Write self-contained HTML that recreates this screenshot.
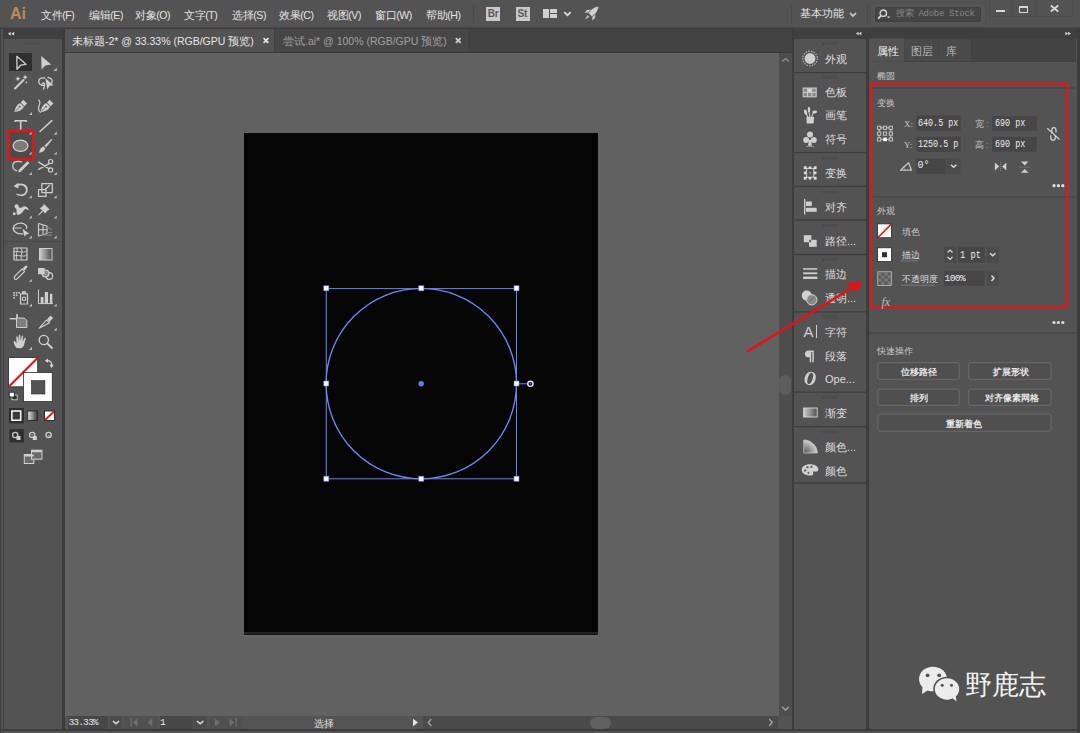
<!DOCTYPE html>
<html><head><meta charset="utf-8">
<style>
*{margin:0;padding:0;box-sizing:border-box}
html,body{width:1080px;height:733px;overflow:hidden;background:#535353;font-family:"Liberation Sans",sans-serif;color:#dcdcdc}
.a{position:absolute}
.t{position:absolute;white-space:nowrap;line-height:1}
svg{position:absolute;overflow:visible}
.mono{font-family:"Liberation Mono",monospace}
.sx{transform:scaleX(0.84);transform-origin:0 0}
</style></head><body>
<!-- window borders -->
<div class="a" style="left:0;top:0;width:1px;height:733px;background:#3e3e3e"></div>

<!-- ===== MENU BAR ===== -->
<div class="a" style="left:0;top:0;width:1080px;height:28px;background:#535353"></div>
<div class="t" style="left:10px;top:5.5px;font-size:16px;font-weight:bold;color:#bf8a5c;letter-spacing:0px">Ai</div>
<div class="t" style="left:41px;top:9.5px;font-size:10.5px;color:#e4e4e4;letter-spacing:-0.4px">文件(F)</div>
<div class="t" style="left:89px;top:9.5px;font-size:10.5px;color:#e4e4e4;letter-spacing:-0.4px">编辑(E)</div>
<div class="t" style="left:135px;top:9.5px;font-size:10.5px;color:#e4e4e4;letter-spacing:-0.4px">对象(O)</div>
<div class="t" style="left:184px;top:9.5px;font-size:10.5px;color:#e4e4e4;letter-spacing:-0.4px">文字(T)</div>
<div class="t" style="left:232px;top:9.5px;font-size:10.5px;color:#e4e4e4;letter-spacing:-0.4px">选择(S)</div>
<div class="t" style="left:279px;top:9.5px;font-size:10.5px;color:#e4e4e4;letter-spacing:-0.4px">效果(C)</div>
<div class="t" style="left:327px;top:9.5px;font-size:10.5px;color:#e4e4e4;letter-spacing:-0.4px">视图(V)</div>
<div class="t" style="left:375px;top:9.5px;font-size:10.5px;color:#e4e4e4;letter-spacing:-0.4px">窗口(W)</div>
<div class="t" style="left:426px;top:9.5px;font-size:10.5px;color:#e4e4e4;letter-spacing:-0.4px">帮助(H)</div>
<div class="a" style="left:473px;top:5px;width:1px;height:18px;background:#4a4a4a"></div>
<!-- Br / St -->
<div class="a" style="left:486px;top:7px;width:14px;height:14px;background:#c9c9c9"></div>
<div class="t" style="left:487.8px;top:9.3px;font-size:10px;font-weight:bold;color:#5a5a5a;letter-spacing:-0.3px">Br</div>
<div class="a" style="left:516px;top:7px;width:14px;height:14px;background:#c9c9c9"></div>
<div class="t" style="left:517.6px;top:9.3px;font-size:10px;font-weight:bold;color:#5a5a5a;letter-spacing:-0.3px">St</div>
<!-- layout icon -->
<svg style="left:543px;top:8px" width="16" height="11" viewBox="0 0 16 11">
<rect x="0" y="1" width="6" height="9" fill="#d0d0d0"/><rect x="7" y="1" width="7" height="4" fill="#d0d0d0"/><rect x="7" y="6" width="7" height="4" fill="#d0d0d0"/></svg>
<svg style="left:563px;top:10.5px" width="9" height="6" viewBox="0 0 9 6"><path d="M1.2 1.2 L4.5 4.2 L7.8 1.2" stroke="#d8d8d8" stroke-width="1.8" fill="none"/></svg>
<!-- rocket -->
<svg style="left:584px;top:6px" width="15" height="15" viewBox="0 0 15 15">
<path d="M14.5 0.5 C10 1 7 3.5 4.5 7 L8 10.5 C11.5 8 14 5 14.5 0.5 Z" fill="#cfcfcf"/>
<path d="M4 6.5 L0.5 7 L3 4 L6.5 3.5 Z M8.5 11 L8 14.5 L11 12 L11.5 8.5 Z" fill="#cfcfcf"/>
<path d="M3.5 9 L1 13.5 L5.5 11 Z" fill="#bdbdbd"/></svg>

<div class="a" style="left:791px;top:5px;width:1px;height:18px;background:#4a4a4a"></div>
<div class="t" style="left:800px;top:8.3px;font-size:10.5px;color:#e4e4e4">基本功能</div>
<svg style="left:849px;top:12px" width="8" height="6" viewBox="0 0 8 6"><path d="M1 1 L4 4 L7 1" stroke="#d0d0d0" stroke-width="1.6" fill="none"/></svg>
<div class="a" style="left:867px;top:5px;width:1px;height:18px;background:#4a4a4a"></div>
<!-- search -->
<div class="a" style="left:870px;top:2.5px;width:116px;height:24px;background:#565656;border:1px solid #4f4f4f;border-radius:2px"></div><div class="a" style="left:874.6px;top:7px;width:106.4px;height:15.4px;background:#454545;border:1px solid #3f3f3f;border-radius:2px"></div>
<svg style="left:877px;top:8px" width="16" height="13" viewBox="0 0 16 13"><circle cx="6.3" cy="5.2" r="3.2" stroke="#d8d8d8" stroke-width="1.3" fill="none"/><path d="M4 7.6 L1.2 10.6" stroke="#d8d8d8" stroke-width="1.8"/><path d="M9.8 8.6 L13.2 8.6 L11.5 10.2Z" fill="#d8d8d8"/></svg>
<div class="t mono" style="left:896px;top:9.5px;font-size:9px;color:#858585;letter-spacing:-0.3px">搜索 Adobe Stock</div>
<!-- window buttons -->
<div class="a" style="left:989px;top:0;width:84px;height:16.5px;border:1px solid #4d4d4d;border-top:none"></div>
<div class="a" style="left:1012px;top:0;width:1px;height:16px;background:#4d4d4d"></div>
<div class="a" style="left:1035px;top:0;width:1px;height:16px;background:#4d4d4d"></div>
<div class="a" style="left:995.7px;top:9.8px;width:9.3px;height:2.7px;background:#d8d8d8"></div>
<div class="a" style="left:1019.4px;top:6px;width:8.7px;height:6.5px;border:1.5px solid #d8d8d8;border-top-width:2px"></div>
<svg style="left:1049.9px;top:5px" width="9" height="7" viewBox="0 0 9 7"><path d="M0.8 0.5 L8.2 6.5 M8.2 0.5 L0.8 6.5" stroke="#d8d8d8" stroke-width="1.8"/></svg>
<!-- dark line under menu -->
<div class="a" style="left:0;top:27px;width:1080px;height:1px;background:#484848"></div><div class="a" style="left:0;top:28px;width:1080px;height:1px;background:#3a3a3a"></div>

<!-- ===== LEFT TOOLBAR ===== -->
<div class="a" style="left:3px;top:28px;width:1px;height:701px;background:#3e3e3e"></div>
<div class="a" style="left:4px;top:28px;width:58px;height:701px;background:#535353"></div>
<div class="a" style="left:4px;top:28px;width:58px;height:11px;background:#3f3f3f"></div>
<div class="a" style="left:62px;top:28px;width:3px;height:701px;background:#3c3c3c"></div>

<!-- toolbar header -->
<svg style="left:0;top:0" width="64" height="480" viewBox="0 0 64 480">
<g fill="#d8d8d8"><path d="M8 33.7 L10.8 31.7 L10.8 35.7Z M11.4 33.7 L14.2 31.7 L14.2 35.7Z"/></g>
<!-- gripper -->
<g fill="#464646"><rect x="24" y="42" width="1" height="3"/><rect x="26.5" y="42" width="1" height="3"/><rect x="29" y="42" width="1" height="3"/><rect x="31.5" y="42" width="1" height="3"/><rect x="34" y="42" width="1" height="3"/><rect x="36.5" y="42" width="1" height="3"/><rect x="39" y="42" width="1" height="3"/></g>
<rect x="9" y="53" width="23" height="18" fill="#2f2f2f"/>
<g fill="none" stroke="#cfcfcf" stroke-width="1.3" stroke-linejoin="round" stroke-linecap="round">
 <!-- selection -->
 <path d="M16.8 56.3 L26 64.3 L20.6 65.2 L17 69.3 Z"/>
 <!-- magic wand stick -->
 <path d="M15 88.5 L23.5 80" stroke-width="2"/>
 <!-- lasso loop -->
 <path d="M44.5 78 C41 77.2 38.6 79 38.8 81.8 C39 84.5 41.5 85.8 43.5 85.3 M42.5 85.5 C41.3 83.5 43.2 82 44.4 83.5 C45.3 84.8 44 87 43.6 89" stroke-width="1.3"/>
 <path d="M48 77.3 C51.5 78 53 80.5 51.8 83" stroke-width="1.3"/>
 <!-- T -->
 <path d="M15.3 122 L15.3 120.8 L26.2 120.8 L26.2 122 M20.7 120.8 L20.7 130" stroke-width="1.6" stroke-linecap="butt"/>
 <!-- line -->
 <path d="M40 131.5 L51.8 120.6" stroke-width="1.5"/>
 <!-- curvature tail -->
 <path d="M38.8 100 C40.5 102 40 104 39 106 C38 108 38.5 111 40.5 112.3" stroke-width="1.2"/>
 <!-- shaper arc -->
 <path d="M16.5 170.7 C11.5 169 11.5 162 17 161.5 C19 161.3 20.5 161.5 21.5 162" stroke-width="1.3"/>
 <!-- scissors -->
 <path d="M38.7 162.2 L48.8 168.6 M38.7 169.3 L48.8 163.8" stroke-width="1.4"/>
 <circle cx="50.6" cy="161.6" r="2.1" stroke-width="1.2"/><circle cx="50.6" cy="169.9" r="2.1" stroke-width="1.2"/>
 <!-- rotate -->
 <path d="M17.5 185 C22 183.2 27 185.5 26.8 190 C26.6 193 24.5 195 21.5 195.3" stroke-width="1.8"/>
 <path d="M20 195.2 L16.5 194.2" stroke-width="1.5" stroke-dasharray="1 1"/>
 <!-- scale -->
 <rect x="38.5" y="189.6" width="7.5" height="6.8" stroke-width="1.2"/>
 <rect x="41.8" y="183.6" width="10.5" height="9" stroke-width="1.2"/>
 <path d="M45 189.5 L49.5 185.5" stroke-width="1.2"/>
 <!-- shape builder ellipse -->
 <path d="M23 233.8 C15 234.5 12.5 230 13.5 227 C14.5 223.5 21 222 25 224.5 C26.5 225.5 27 227 26.5 228.5" stroke-width="1.2"/>
 <path d="M13.5 228 L21 228" stroke-width="1"/>
 <!-- perspective grid -->
 <path d="M38.5 223.5 L38.5 236 L47 233.5 L47 226 Z M38.5 229.7 L47 229.7 M43 224.8 L43 234.8" stroke-width="1.1"/>
 <!-- mesh -->
 <rect x="14" y="248" width="13" height="12" stroke-width="1.2"/>
 <path d="M17 248 C18 252 15 255 17 260 M21 248 C24 252 19 256 22 260 M14 252 C18 250 22 254 27 251 M14 256 C18 254 23 258 27 255" stroke-width="1"/>
 <!-- eyedropper body -->
 <path d="M15 279.2 C13.8 278 14 277 15 276 L22 269 L24.5 271.5 L17.5 278.5 C16.5 279.5 15.8 279.8 15 279.2Z" stroke-width="1.1"/>
 <!-- blend circles -->
 <circle cx="49.3" cy="276" r="3.3" stroke-width="1.2"/>
 <circle cx="45.5" cy="273.4" r="3.4" stroke-width="1.2" fill="#8a8a8a"/>
 <!-- symbol sprayer -->
 <rect x="20.5" y="293.8" width="7" height="10.2" stroke-width="1.2"/>
 <circle cx="24" cy="298.8" r="1.8" stroke-width="1.1"/>
 <!-- column graph -->
 <path d="M38.5 290 L38.5 303.6 L52.6 303.6" stroke-width="1"/>
 <!-- artboard -->
 <path d="M17 314.3 L17 318 M10 318.8 L16 318.8" stroke-width="1.1"/>
 <!-- slice -->
 <path d="M39 328.3 L46.5 320 L49.5 322.8 Z" stroke-width="1.1"/>
 <!-- zoom -->
 <circle cx="43.8" cy="340" r="4.6" stroke-width="1.4"/>
 <path d="M47.2 343.4 L52 348" stroke-width="2"/>
</g>
<g fill="#cfcfcf">
 <!-- direct selection -->
 <path d="M41.2 56 L51.2 64.4 L45.3 65.5 L41.6 69.5 Z"/>
 <!-- magic wand stars -->
 <path d="M17.9 76.3 L18.8 78 L20.5 78.8 L18.8 79.6 L17.9 81.3 L17 79.6 L15.3 78.8 L17 78Z"/>
 <path d="M25.1 74.8 L26 76.5 L27.7 77.3 L26 78.1 L25.1 79.8 L24.2 78.1 L22.5 77.3 L24.2 76.5Z"/>
 <path d="M26.2 81 L26.9 82.4 L26.2 83.8 L25.5 82.4Z M24.8 82.4 L26.2 81.7 L27.6 82.4 L26.2 83.1Z"/>
<!-- lasso arrow -->
 <path d="M45.5 78.2 L53.6 85.2 L49.6 85.8 L47.2 89.5 Z"/>
 <!-- pen -->
 <path d="M14.3 112.2 C15 108 16.5 105 20 103 L24 106.7 C22 110 19 111.5 14.3 112.2Z"/>
 <path d="M20.8 102.5 L23.3 99.8 L27 103.4 L24.4 106.2Z"/>
 <path d="M15 111.5 L19.3 107.2" stroke="#5a5a5a" stroke-width="0.8"/><circle cx="19.8" cy="106.7" r="0.9" fill="#5a5a5a"/>
 <!-- curvature pen -->
 <path d="M40.5 112.2 C41.2 108 42.7 105 46.2 103 L50.2 106.7 C48.2 110 45.2 111.5 40.5 112.2Z"/>
 <path d="M47 102.5 L49.5 99.8 L53.4 103.4 L50.6 106.2Z"/>
 <path d="M41.2 111.5 L45.5 107.2" stroke="#5a5a5a" stroke-width="0.8"/><circle cx="46" cy="106.7" r="0.9" fill="#5a5a5a"/>
 <!-- paintbrush -->
 <path d="M39 152.8 C39.5 149.5 41 147.3 43.5 146.5 L45.3 148.3 C44.5 151 42.5 152.5 39 152.8Z"/>
 <path d="M44.3 145.8 L51 139.2 C51.8 138.6 52.6 139.3 52 140.1 L46 147.5Z"/>
 <!-- shaper pencil -->
 <path d="M18.2 172.6 L18.8 169.8 L27.5 161.2 L29.4 163.1 L20.8 171.8Z"/>
 <!-- rotate arrowhead -->
 <path d="M13.6 186.2 L18.2 182.8 L18.6 188.6Z"/>
 <!-- warp -->
 <path d="M14.5 206 C15.5 203.5 18 204 18.5 206 C19 208 21 208.5 22.5 207 C24 205.5 27 206 28.8 209.5 L27.6 210 C26.5 208.5 25 208.5 24 210 C22 213 20.5 214.5 17.5 215 C15.8 213 17 211 16.5 209.5 C16 208 14 207.5 14.5 206Z"/>
 <rect x="13" y="212.5" width="2.5" height="2.5"/>
 <!-- pin -->
 <path d="M44 204 L49.6 209.6 L47.6 210.6 L45.2 213.6 L39.9 208.2 L42.9 205.9Z"/>
 <path d="M41.8 210.7 L38 215 L38.6 215.6 L42.9 211.8Z"/>
 <!-- shape builder arrow -->
 <path d="M22.5 228.8 L29.3 233.8 L26.2 234.5 L24.5 236.5Z"/>
 <!-- blend square -->
 <rect x="38.1" y="268" width="6.4" height="6.2"/>
 <!-- eyedropper bulb -->
 <path d="M22.5 268.5 L25.5 265.8 C26.5 265 28 266.5 27.2 267.5 L24.5 270.5Z"/>
 <path d="M47 319.3 L50.5 315.5 L53 318 L49.6 322Z"/>
 <!-- symbol sprayer dots -->
 <rect x="13.3" y="292" width="1.6" height="1.6"/><rect x="15.8" y="292" width="1.6" height="1.6"/><rect x="18.3" y="292" width="1.6" height="1.6"/>
 <rect x="13.3" y="294.5" width="1.6" height="1.6"/><rect x="15.8" y="294.5" width="1.6" height="1.6"/>
 <rect x="13.3" y="297" width="1.6" height="1.6"/>
 <rect x="22" y="291.2" width="3.8" height="2.3"/>
 <!-- column bars -->
 <rect x="40.7" y="297" width="2.8" height="6.2"/><rect x="44.8" y="292" width="3.2" height="11.2"/><rect x="49.9" y="293.8" width="2.4" height="9.4"/>
 <!-- hand -->
 <path d="M16.5 348 C14.5 345.5 13.5 343 13.8 341.5 C14.2 340.8 15 341 15.8 342.2 L16.5 343.2 L16.3 337 C16.3 336 17.6 336 17.7 337 L18.4 341 L18.8 335.5 C18.9 334.6 20.2 334.6 20.3 335.5 L20.7 341 L21.8 336 C22 335.2 23.2 335.3 23.1 336.2 L22.7 341.5 L24.6 338 C25 337.3 26 337.6 25.8 338.4 L24 345 C23.5 347 22 348.2 20.5 348.2Z"/>
 <!-- artboard doc -->
 <path d="M16.5 318 L24.3 318 L26.8 320.5 L26.8 327.5 L16.5 327.5Z" fill="#7e7e7e" stroke="#cfcfcf" stroke-width="1"/><path d="M17 314.3 L17 318 M10 318.8 L17 318.8" stroke="#d8d8d8" stroke-width="1.1"/>
 <!-- gradient -->
</g>
<defs><linearGradient id="gr" x1="0" x2="1" y1="0" y2="0"><stop offset="0" stop-color="#d0d0d0"/><stop offset="1" stop-color="#4a4a4a"/></linearGradient></defs>
<rect x="39.5" y="248.5" width="12.5" height="11.5" fill="url(#gr)" stroke="#cfcfcf" stroke-width="1"/>
<!-- perspective fades -->
<path d="M47 227 L52 229.5 M47 232.5 L52 232.5 M41 235 L52 235" stroke="#8a8a8a" stroke-width="1"/>
<rect x="10" y="132" width="22" height="26" fill="#4b4b4b"/>
<!-- flyout triangles -->
<g fill="#bdbdbd">
 <path d="M56.8 67.7 L56.8 71 L53.5 71Z"/>
 <path d="M32 112 L32 115 L29 115Z"/>
 <path d="M31.6 131.8 L31.6 134.6 L28.8 134.6Z"/>
 <path d="M56.8 131.6 L56.8 134.8 L53.6 134.8Z"/>
 <path d="M31.6 151.8 L31.6 154.6 L28.8 154.6Z"/>
 <path d="M56.8 151.8 L56.8 154.6 L54 154.6Z"/>
 <path d="M31.8 172 L31.8 175 L28.8 175Z"/>
 <path d="M56.8 172 L56.8 175 L53.8 175Z"/>
 <path d="M31.8 195.3 L31.8 198.3 L28.8 198.3Z"/>
 <path d="M56.7 195.3 L56.7 198.3 L53.7 198.3Z"/>
 <path d="M31.8 215.5 L31.8 218.5 L28.8 218.5Z"/>
 <path d="M56.7 215.5 L56.7 218.5 L53.7 218.5Z"/>
 <path d="M31.8 235.5 L31.8 238.5 L28.8 238.5Z"/>
 <path d="M56.7 235.5 L56.7 238.5 L53.7 238.5Z"/>
 <path d="M31.8 278.9 L31.8 281.8 L28.8 281.8Z"/>
 <path d="M32 303.7 L32 306.5 L28.9 306.5Z"/>
 <path d="M56.7 303.7 L56.7 306.5 L53.7 306.5Z"/>
 <path d="M56.7 327.5 L56.7 330.7 L53.7 330.7Z"/>
 <path d="M32 346.7 L32 350 L28.9 350Z"/>
</g>
<!-- separator -->
<rect x="5" y="241" width="56" height="1" fill="#4a4a4a"/>
<!-- ellipse tool selected -->
<ellipse cx="20.5" cy="145.8" rx="7.4" ry="5.6" fill="#7a7a7a" stroke="#d6d6d6" stroke-width="1.2"/>
<rect x="8.9" y="130.9" width="24.3" height="28.2" fill="none" stroke="#e0151b" stroke-width="2.6"/>
<!-- fill / stroke -->
<rect x="8.6" y="357.6" width="29.1" height="29.2" fill="#ffffff" stroke="#2a2a2a" stroke-width="0.8"/>
<path d="M9.5 386 L37 358.5" stroke="#e0151b" stroke-width="2.2"/>
<rect x="23.4" y="372.4" width="28.9" height="29.2" fill="#ffffff" stroke="#2a2a2a" stroke-width="0.8"/>
<rect x="31.5" y="380.6" width="13.4" height="13.4" fill="#535353" stroke="#2a2a2a" stroke-width="0.6"/>
<!-- swap -->
<path d="M47.5 360.7 C50 360.7 51.6 362.2 51.6 365" stroke="#d0d0d0" stroke-width="1.3" fill="none"/>
<path d="M44.8 360.7 L48 358.6 L48 362.8Z M51.6 368 L49.5 364.8 L53.7 364.8Z" fill="#d8d8d8"/>
<!-- default -->
<rect x="12" y="395" width="5.2" height="4.8" fill="#2a2a2a" stroke="#cfcfcf" stroke-width="0.9"/>
<rect x="9.3" y="392.2" width="5.2" height="4.8" fill="#ffffff" stroke="#2a2a2a" stroke-width="0.9"/>
<!-- color mode row -->
<rect x="9" y="408" width="15" height="15.4" fill="#2f2f2f"/>
<rect x="11.9" y="411" width="8.8" height="9.2" fill="#3a3a3a" stroke="#ffffff" stroke-width="1.5"/>
<defs><linearGradient id="gr2" x1="0" x2="1"><stop offset="0" stop-color="#e8e8e8"/><stop offset="1" stop-color="#3a3a3a"/></linearGradient></defs>
<rect x="27.7" y="411" width="9.6" height="9.4" fill="url(#gr2)" stroke="#222" stroke-width="0.9"/>
<rect x="44.5" y="411" width="10" height="9.4" fill="#ffffff" stroke="#222" stroke-width="0.9"/>
<path d="M45 420 L54 411.5" stroke="#e0151b" stroke-width="1.8"/>
<!-- draw modes -->
<rect x="9.6" y="429.1" width="14.2" height="13.3" fill="#2f2f2f"/>
<g fill="none" stroke="#c8c8c8" stroke-width="1.4">
<circle cx="15.2" cy="435" r="2.6"/><circle cx="32.2" cy="435" r="2.6"/><circle cx="48.6" cy="435" r="2.6"/>
</g>
<rect x="16.5" y="436" width="4" height="4" fill="#d0d0d0"/>
<rect x="32.8" y="436" width="4" height="4" fill="#d0d0d0"/>
<circle cx="32.2" cy="435" r="0.8" fill="#9a9a9a"/>
<path d="M48.6 435 L49.6 437.5" stroke="#c8c8c8" stroke-width="1"/>
<!-- screen mode -->
<rect x="24.3" y="454.5" width="9.5" height="9" fill="#6a6a6a" stroke="#d0d0d0" stroke-width="1"/>
<rect x="31.5" y="450.2" width="10.5" height="9" fill="#6a6a6a" stroke="#d0d0d0" stroke-width="1"/>
<rect x="24.3" y="454.5" width="9.5" height="2" fill="#d0d0d0"/>
<rect x="31.5" y="450.2" width="10.5" height="2" fill="#d0d0d0"/>
</svg>

<!-- ===== DOCUMENT AREA ===== -->
<div class="a" style="left:65px;top:29px;width:727px;height:24px;background:#424242"></div>
<div class="a" style="left:65px;top:29px;width:209px;height:23px;background:#535353"></div>
<div class="t" style="left:72px;top:36px;font-size:10.5px;color:#e6e6e6">未标题-2* @ 33.33% (RGB/GPU 预览)</div>
<div class="a" style="left:275px;top:29px;width:193px;height:23px;background:#474747"></div>
<div class="t" style="left:283px;top:36px;font-size:10.5px;color:#a0a0a0">尝试.ai* @ 100% (RGB/GPU 预览)</div>
<svg style="left:0;top:0" width="600" height="60" viewBox="0 0 600 60"><path d="M263.6 38.2 L268.4 42.8 M268.4 38.2 L263.6 42.8" stroke="#e8e8e8" stroke-width="1.7"/><path d="M455.8 38.2 L460.6 42.8 M460.6 38.2 L455.8 42.8" stroke="#cfcfcf" stroke-width="1.7"/></svg>

<div class="a" style="left:65px;top:52px;width:727px;height:1px;background:#383838"></div>

<!-- canvas -->
<div class="a" style="left:65px;top:53px;width:713.5px;height:663px;background:#616161"></div>
<div class="a" style="left:65px;top:53px;width:6px;height:663px;background:#646464"></div>
<!-- artboard -->
<div class="a" style="left:244px;top:133px;width:354px;height:500px;background:#050505"></div><div class="a" style="left:244px;top:632px;width:354px;height:1.6px;background:#222"></div><div class="a" style="left:244px;top:633.6px;width:354px;height:1.4px;background:#121212"></div><div class="a" style="left:244px;top:635px;width:354px;height:1.5px;background:#676767"></div>

<!-- selection -->
<svg style="left:0;top:0" width="1080" height="733" viewBox="0 0 1080 733">
<g fill="none" stroke="#6c84ea" stroke-width="1">
<circle cx="421.3" cy="383.6" r="95.2" stroke-width="1.35" stroke="#7088ee"/>
<rect x="326.3" y="288.6" width="190.2" height="190.2"/>
<path d="M519 383.8 L527.5 383.8"/>
</g>
<g fill="#ffffff" stroke="#6c84ea" stroke-width="0.6">
<rect x="323.8" y="285.8" width="5" height="5"/><rect x="418.8" y="285.8" width="5" height="5"/><rect x="514" y="285.8" width="5" height="5"/>
<rect x="323.8" y="381" width="5" height="5"/><rect x="514" y="381" width="5" height="5"/>
<rect x="323.8" y="476.2" width="5" height="5"/><rect x="418.8" y="476.2" width="5" height="5"/><rect x="514" y="476.2" width="5" height="5"/>
</g>
<circle cx="530.4" cy="383.8" r="2.6" fill="#0a0a0a" stroke="#e6ebff" stroke-width="1.4"/>
<circle cx="530.4" cy="383.8" r="0.8" fill="#6c84ea"/>
<circle cx="421.2" cy="383.7" r="2.7" fill="#5f7ef0"/>
</svg>
<!-- vertical scrollbar -->
<div class="a" style="left:778.5px;top:53px;width:14px;height:663px;background:#4d4d4d"></div>
<div class="a" style="left:779.3px;top:374.6px;width:11.7px;height:20px;background:#5c5c5c;border-radius:6px"></div>
<!-- horizontal/status bar -->
<div class="a" style="left:65px;top:716px;width:727px;height:13px;background:#545454"></div>
<div class="a" style="left:68px;top:716px;width:40px;height:12.5px;background:#474747"></div>
<div class="t mono" style="left:68.5px;top:718px;font-size:9.6px;color:#e6e6e6;letter-spacing:-0.9px">33.33%</div>
<div class="a" style="left:110px;top:716px;width:12px;height:12.5px;background:#4c4c4c"></div>
<div class="a" style="left:124px;top:716px;width:33px;height:12.5px;background:#505050"></div>
<div class="a" style="left:159.5px;top:716px;width:33px;height:12.5px;background:#474747"></div>
<div class="t mono" style="left:160px;top:718px;font-size:9.6px;color:#e6e6e6">1</div>
<div class="a" style="left:193.5px;top:716px;width:13.5px;height:12.5px;background:#4c4c4c"></div>
<div class="a" style="left:209px;top:716px;width:34px;height:12.5px;background:#505050"></div>
<div class="a" style="left:423px;top:716px;width:355px;height:12.5px;background:#4a4a4a"></div>
<div class="a" style="left:590px;top:716.7px;width:21px;height:12px;background:#5f5f5f;border-radius:6px"></div>
<div class="t" style="left:314px;top:719px;font-size:10px;color:#e0e0e0">选择</div>
<svg style="left:0;top:0" width="1080" height="733" viewBox="0 0 1080 733">
<path d="M113 721 L116 723.8 L119 721" stroke="#e0e0e0" stroke-width="1.5" fill="none"/>
<path d="M197 721 L200.2 723.8 L203.4 721" stroke="#e0e0e0" stroke-width="1.5" fill="none"/>
<g fill="#6e6e6e"><rect x="130.5" y="718.5" width="1.3" height="8"/><path d="M137.5 718.5 L137.5 726.5 L132.5 722.5Z"/><path d="M152.4 718.5 L152.4 726.5 L147.4 722.5Z"/>
<path d="M215 718.5 L215 726.5 L220 722.5Z"/><path d="M229.5 718.5 L229.5 726.5 L234.5 722.5Z"/><rect x="235.5" y="718.5" width="1.3" height="8"/></g>
<path d="M413 718.8 L413 726.2 L418 722.5Z" fill="#e6e6e6"/>
<path d="M431.3 719 L428.2 722.5 L431.3 726" stroke="#a8a8a8" stroke-width="1.2" fill="none"/>
<path d="M769.2 719 L772.3 722.5 L769.2 726" stroke="#a8a8a8" stroke-width="1.2" fill="none"/>
<path d="M782.2 710 L785.5 707 L788.8 710" stroke="#a8a8a8" stroke-width="1.3" fill="none" transform="rotate(180 785.5 708.5)"/>
<path d="M782 61.5 L785.5 58.5 L789 61.5" stroke="#909090" stroke-width="1.3" fill="none"/>
</svg>
<div class="a" style="left:778px;top:716px;width:14px;height:13px;background:#535353"></div>
<!-- ===== RIGHT PANELS ===== -->
<div class="a" style="left:792px;top:29px;width:2px;height:700px;background:#3c3c3c"></div>
<div class="a" style="left:794px;top:28px;width:286px;height:11px;background:#3f3f3f"></div>
<div class="a" style="left:794px;top:39px;width:72px;height:690px;background:#535353"></div>
<div class="a" style="left:866px;top:39px;width:3px;height:690px;background:#3c3c3c"></div>
<div class="a" style="left:869px;top:39px;width:208px;height:690px;background:#535353"></div>
<div class="a" style="left:1077px;top:28px;width:3px;height:705px;background:#3c3c3c"></div>

<!-- icon panel -->
<div class="t" style="left:825px;top:53.5px;font-size:11px;color:#dedede">外观</div>
<div class="t" style="left:825px;top:87.0px;font-size:11px;color:#dedede">色板</div>
<div class="t" style="left:825px;top:110.3px;font-size:11px;color:#dedede">画笔</div>
<div class="t" style="left:825px;top:134.3px;font-size:11px;color:#dedede">符号</div>
<div class="t" style="left:825px;top:168.0px;font-size:11px;color:#dedede">变换</div>
<div class="t" style="left:825px;top:202.0px;font-size:11px;color:#dedede">对齐</div>
<div class="t" style="left:825px;top:236.0px;font-size:11px;color:#dedede">路径...</div>
<div class="t" style="left:825px;top:269.0px;font-size:11px;color:#dedede">描边</div>
<div class="t" style="left:825px;top:293.0px;font-size:11px;color:#dedede">透明...</div>
<div class="t" style="left:825px;top:327.0px;font-size:11px;color:#dedede">字符</div>
<div class="t" style="left:825px;top:351.0px;font-size:11px;color:#dedede">段落</div>
<div class="t" style="left:825px;top:374.0px;font-size:11px;color:#dedede">Ope...</div>
<div class="t" style="left:825px;top:408.0px;font-size:11px;color:#dedede">渐变</div>
<div class="t" style="left:825px;top:442.0px;font-size:11px;color:#dedede">颜色...</div>
<div class="t" style="left:825px;top:465.5px;font-size:11px;color:#dedede">颜色</div>
<svg style="left:0;top:0" width="1080" height="733" viewBox="0 0 1080 733">
<rect x="794" y="72.0" width="72" height="1.2" fill="#3c3c3c"/>
<rect x="794" y="151.9" width="72" height="1.2" fill="#3c3c3c"/>
<rect x="794" y="185.7" width="72" height="1.2" fill="#3c3c3c"/>
<rect x="794" y="219.5" width="72" height="1.2" fill="#3c3c3c"/>
<rect x="794" y="253.9" width="72" height="1.2" fill="#3c3c3c"/>
<rect x="794" y="311.3" width="72" height="1.2" fill="#3c3c3c"/>
<rect x="794" y="391.5" width="72" height="1.2" fill="#3c3c3c"/>
<rect x="794" y="426.1" width="72" height="1.2" fill="#3c3c3c"/>
<rect x="794" y="482.5" width="72" height="1.2" fill="#3c3c3c"/>
<rect x="822.5" y="42" width="1" height="3" fill="#474747"/>
<rect x="824.8" y="42" width="1" height="3" fill="#474747"/>
<rect x="827.1" y="42" width="1" height="3" fill="#474747"/>
<rect x="829.4" y="42" width="1" height="3" fill="#474747"/>
<rect x="831.7" y="42" width="1" height="3" fill="#474747"/>
<rect x="834.0" y="42" width="1" height="3" fill="#474747"/>
<rect x="836.3" y="42" width="1" height="3" fill="#474747"/>
<rect x="822.5" y="75.5" width="1" height="3" fill="#474747"/>
<rect x="824.8" y="75.5" width="1" height="3" fill="#474747"/>
<rect x="827.1" y="75.5" width="1" height="3" fill="#474747"/>
<rect x="829.4" y="75.5" width="1" height="3" fill="#474747"/>
<rect x="831.7" y="75.5" width="1" height="3" fill="#474747"/>
<rect x="834.0" y="75.5" width="1" height="3" fill="#474747"/>
<rect x="836.3" y="75.5" width="1" height="3" fill="#474747"/>
<rect x="822.5" y="156.5" width="1" height="3" fill="#474747"/>
<rect x="824.8" y="156.5" width="1" height="3" fill="#474747"/>
<rect x="827.1" y="156.5" width="1" height="3" fill="#474747"/>
<rect x="829.4" y="156.5" width="1" height="3" fill="#474747"/>
<rect x="831.7" y="156.5" width="1" height="3" fill="#474747"/>
<rect x="834.0" y="156.5" width="1" height="3" fill="#474747"/>
<rect x="836.3" y="156.5" width="1" height="3" fill="#474747"/>
<rect x="822.5" y="190.5" width="1" height="3" fill="#474747"/>
<rect x="824.8" y="190.5" width="1" height="3" fill="#474747"/>
<rect x="827.1" y="190.5" width="1" height="3" fill="#474747"/>
<rect x="829.4" y="190.5" width="1" height="3" fill="#474747"/>
<rect x="831.7" y="190.5" width="1" height="3" fill="#474747"/>
<rect x="834.0" y="190.5" width="1" height="3" fill="#474747"/>
<rect x="836.3" y="190.5" width="1" height="3" fill="#474747"/>
<rect x="822.5" y="224" width="1" height="3" fill="#474747"/>
<rect x="824.8" y="224" width="1" height="3" fill="#474747"/>
<rect x="827.1" y="224" width="1" height="3" fill="#474747"/>
<rect x="829.4" y="224" width="1" height="3" fill="#474747"/>
<rect x="831.7" y="224" width="1" height="3" fill="#474747"/>
<rect x="834.0" y="224" width="1" height="3" fill="#474747"/>
<rect x="836.3" y="224" width="1" height="3" fill="#474747"/>
<rect x="822.5" y="258" width="1" height="3" fill="#474747"/>
<rect x="824.8" y="258" width="1" height="3" fill="#474747"/>
<rect x="827.1" y="258" width="1" height="3" fill="#474747"/>
<rect x="829.4" y="258" width="1" height="3" fill="#474747"/>
<rect x="831.7" y="258" width="1" height="3" fill="#474747"/>
<rect x="834.0" y="258" width="1" height="3" fill="#474747"/>
<rect x="836.3" y="258" width="1" height="3" fill="#474747"/>
<rect x="822.5" y="315.5" width="1" height="3" fill="#474747"/>
<rect x="824.8" y="315.5" width="1" height="3" fill="#474747"/>
<rect x="827.1" y="315.5" width="1" height="3" fill="#474747"/>
<rect x="829.4" y="315.5" width="1" height="3" fill="#474747"/>
<rect x="831.7" y="315.5" width="1" height="3" fill="#474747"/>
<rect x="834.0" y="315.5" width="1" height="3" fill="#474747"/>
<rect x="836.3" y="315.5" width="1" height="3" fill="#474747"/>
<rect x="822.5" y="396" width="1" height="3" fill="#474747"/>
<rect x="824.8" y="396" width="1" height="3" fill="#474747"/>
<rect x="827.1" y="396" width="1" height="3" fill="#474747"/>
<rect x="829.4" y="396" width="1" height="3" fill="#474747"/>
<rect x="831.7" y="396" width="1" height="3" fill="#474747"/>
<rect x="834.0" y="396" width="1" height="3" fill="#474747"/>
<rect x="836.3" y="396" width="1" height="3" fill="#474747"/>
<rect x="822.5" y="430.5" width="1" height="3" fill="#474747"/>
<rect x="824.8" y="430.5" width="1" height="3" fill="#474747"/>
<rect x="827.1" y="430.5" width="1" height="3" fill="#474747"/>
<rect x="829.4" y="430.5" width="1" height="3" fill="#474747"/>
<rect x="831.7" y="430.5" width="1" height="3" fill="#474747"/>
<rect x="834.0" y="430.5" width="1" height="3" fill="#474747"/>
<rect x="836.3" y="430.5" width="1" height="3" fill="#474747"/>
<g fill="#cfcfcf">
<!-- appearance -->
<circle cx="810" cy="58.5" r="5.4"/>
</g>
<circle cx="810" cy="58.5" r="7.3" fill="none" stroke="#bdbdbd" stroke-width="1.2" stroke-dasharray="1.4 1.3"/>
<!-- swatches -->
<rect x="803.2" y="88" width="13" height="8.8" fill="#8a8a8a" stroke="#d0d0d0" stroke-width="1"/>
<path d="M807.5 88 L807.5 96.8 M811.8 88 L811.8 96.8 M803.2 92.4 L816.2 92.4" stroke="#d0d0d0" stroke-width="0.9"/>
<rect x="808" y="88.5" width="3.4" height="3.5" fill="#d8d8d8"/>
<!-- brushes -->
<path d="M806.4 117 L814 117 L813.6 123.4 L806.8 123.4Z" fill="#d2d2d2"/>
<g fill="#d0d0d0">
<ellipse cx="805.6" cy="112.3" rx="1.5" ry="2.9" transform="rotate(-18 805.6 112.3)"/>
<ellipse cx="809" cy="109.8" rx="1.3" ry="3" />
<ellipse cx="814.6" cy="112" rx="2.5" ry="1.5" transform="rotate(-12 814.6 112)"/>
</g>
<path d="M806.5 114.5 L808 117.2 M809.2 112.5 L809.8 117.2 M813 113.2 L811.6 117.2" stroke="#d0d0d0" stroke-width="1.1"/>
<!-- club -->
<g fill="#cfcfcf"><circle cx="810" cy="134.6" r="3"/><circle cx="806.2" cy="140" r="3"/><circle cx="813.8" cy="140" r="3"/><path d="M809 140 L811 140 L812 145.8 L808 145.8Z"/><path d="M806 146 L814 146 L814 146.5 L806 146.5Z"/></g>
<!-- transform -->
<rect x="806.6" y="168.4" width="7.2" height="8.8" fill="none" stroke="#cfcfcf" stroke-width="1"/>
<g fill="#e0e0e0"><rect x="803.8" y="166.3" width="2.8" height="2.8"/><rect x="808.7" y="166.5" width="2.6" height="2.5"/><rect x="813.8" y="166.3" width="2.8" height="2.8"/>
<rect x="803.9" y="171.6" width="2.6" height="2.6"/><rect x="813.9" y="171.6" width="2.6" height="2.6"/>
<rect x="803.8" y="176.8" width="2.8" height="2.8"/><rect x="808.7" y="177" width="2.6" height="2.5"/><rect x="813.8" y="176.8" width="2.8" height="2.8"/></g>
<circle cx="810.2" cy="172.8" r="0.9" fill="#a8a8a8"/>
<!-- align -->
<rect x="804" y="198.9" width="1.3" height="15.5" fill="#d0d0d0"/>
<rect x="806" y="201.5" width="5.8" height="4.5" fill="#cfcfcf"/>
<rect x="806" y="207.8" width="10.7" height="4" fill="#cfcfcf"/>
<!-- pathfinder -->
<rect x="803.8" y="235.2" width="7.5" height="7" fill="#cfcfcf"/>
<rect x="809" y="239.8" width="7.7" height="7" fill="#cfcfcf"/>
<rect x="809" y="239.8" width="2.3" height="2.4" fill="#6a6a6a"/>
<!-- stroke -->
<rect x="803.1" y="268.2" width="14.2" height="1.5" fill="#d0d0d0"/>
<rect x="803.1" y="272.4" width="14.2" height="1.8" fill="#d0d0d0"/>
<rect x="803.1" y="276.6" width="14.2" height="2.4" fill="#d0d0d0"/>
<!-- transparency -->
<circle cx="806.8" cy="295.6" r="5" fill="#d2d2d2"/>
<circle cx="811.8" cy="299.8" r="5.2" fill="#8a8a8a" stroke="#cfcfcf" stroke-width="1"/>
<path d="M809 302 L814 297" stroke="#6a6a6a" stroke-width="0.8"/>
<!-- gradient panel -->
<defs><linearGradient id="gp" x1="0" x2="1"><stop offset="0" stop-color="#cfcfcf"/><stop offset="1" stop-color="#505050"/></linearGradient>
<radialGradient id="gq" cx="0" cy="1" r="1"><stop offset="0" stop-color="#505050"/><stop offset="1" stop-color="#d0d0d0"/></radialGradient></defs>
<rect x="803.6" y="408" width="13.6" height="9" fill="url(#gp)" stroke="#cfcfcf" stroke-width="1"/>
<!-- color guide quarter -->
<path d="M803.8 453 L803.8 440 C811 440 817.3 446 817.3 453Z" fill="url(#gq)" stroke="#c8c8c8" stroke-width="0.8"/>
<!-- palette -->
<path d="M810 464.3 C815 464.3 818.3 466.5 818.3 469.5 C818.3 471.5 816 472 814.8 471.5 C813.5 471 812.5 472 813.2 473.5 C813.8 475 812 475.5 810 475.5 C805 475.5 801.8 473 801.8 470 C801.8 466.5 805 464.3 810 464.3Z" fill="#d2d2d2"/>
<g fill="#6a6a6a"><circle cx="805" cy="470.5" r="1.2"/><circle cx="807.5" cy="467.3" r="1.2"/><circle cx="811.5" cy="466.8" r="1.2"/><circle cx="808.5" cy="472.8" r="1.1"/></g>
</svg>
<div class="t" style="left:803.5px;top:324px;font-size:15px;color:#cfcfcf">A</div>
<div class="a" style="left:815.5px;top:324.5px;width:1.3px;height:13.5px;background:#cfcfcf"></div>
<svg style="left:0;top:0" width="1080" height="733" viewBox="0 0 1080 733"><path d="M808.6 350.5 L813.8 350.5 L813.8 362.2 L812.3 362.2 L812.3 351.9 L811.2 351.9 L811.2 362.2 L809.7 362.2 L809.7 357.3 L808.6 357.3 C806.3 357.3 804.9 355.8 804.9 353.9 C804.9 352 806.3 350.5 808.6 350.5Z" fill="#cfcfcf"/></svg>
<svg style="left:0;top:0" width="1080" height="733" viewBox="0 0 1080 733"><g transform="rotate(18 810.2 378.4)"><path fill-rule="evenodd" fill="#cfcfcf" d="M810.2 371.6 C814 371.6 815.6 374.8 815.6 378.4 C815.6 382 814 385.2 810.2 385.2 C806.4 385.2 804.8 382 804.8 378.4 C804.8 374.8 806.4 371.6 810.2 371.6Z M810.2 372.6 C811.8 372.6 812.6 375 812.6 378.4 C812.6 381.8 811.8 384.2 810.2 384.2 C808.6 384.2 807.8 381.8 807.8 378.4 C807.8 375 808.6 372.6 810.2 372.6Z"/></g></svg>
<!-- ===== PROPS PANEL ===== -->
<svg style="left:0;top:0" width="1080" height="733" viewBox="0 0 1080 733">
<path d="M856 33.6 L858.6 31.8 L858.6 35.4Z M858.8 33.6 L861.4 31.8 L861.4 35.4Z" fill="#d8d8d8"/>
<path d="M1070.8 33.6 L1068.2 31.8 L1068.2 35.4Z M1068 33.6 L1065.4 31.8 L1065.4 35.4Z" fill="#d8d8d8"/>
<!-- gripper in props header? none -->
<rect x="869" y="38.5" width="207" height="23" fill="#434343"/>
<rect x="869" y="38.5" width="35" height="23" fill="#535353"/>
<rect x="904.5" y="39.5" width="33.5" height="21.5" fill="#4a4a4a"/>
<rect x="938.5" y="39.5" width="32.5" height="21.5" fill="#4a4a4a"/>
<rect x="904" y="61" width="172" height="0.8" fill="#3e3e3e"/>
<!-- dividers -->
<rect x="869" y="87.3" width="207" height="1.4" fill="#474747"/>
<rect x="869" y="196.5" width="207" height="1.4" fill="#474747"/>
<rect x="869" y="332.3" width="207" height="1.4" fill="#474747"/>
<!-- input boxes -->
<g fill="#464646">
<rect x="916.4" y="115.4" width="44.2" height="15.3"/>
<rect x="916.4" y="136.7" width="44.2" height="15.3"/>
<rect x="916.4" y="158.5" width="29.5" height="15.3"/>
<rect x="946.6" y="158.5" width="14" height="15.3" fill="#4b4b4b"/>
<rect x="992.1" y="116" width="44.6" height="14.8"/>
<rect x="992.1" y="136.9" width="44.6" height="14.7"/>
<rect x="943.9" y="246.7" width="12.4" height="16" fill="#4a4a4a"/>
<rect x="958" y="246.7" width="26.7" height="16"/>
<rect x="986.5" y="246.7" width="12.4" height="16" fill="#4b4b4b"/>
<rect x="943.9" y="270.7" width="40.8" height="15"/>
<rect x="986.5" y="270.7" width="12.4" height="15" fill="#4b4b4b"/>
</g>
<!-- ref point grid -->
<g fill="none" stroke="#d0d0d0" stroke-width="0.9">
<rect x="877.6" y="126.2" width="3.2" height="3.2"/><rect x="883.4" y="126.2" width="3.2" height="3.2"/><rect x="889.2" y="126.2" width="3.2" height="3.2"/>
<rect x="877.6" y="132" width="3.2" height="3.2"/><rect x="883.4" y="132" width="3.2" height="3.2"/><rect x="889.2" y="132" width="3.2" height="3.2"/>
<rect x="877.6" y="137.8" width="3.2" height="3.2"/><rect x="889.2" y="137.8" width="3.2" height="3.2"/>
<path d="M880.8 127.8 L883.4 127.8 M886.6 127.8 L889.2 127.8 M880.8 139.4 L883.4 139.4 M886.6 139.4 L889.2 139.4 M879.2 129.4 L879.2 132 M879.2 135.2 L879.2 137.8 M890.8 129.4 L890.8 132 M890.8 135.2 L890.8 137.8"/>
</g>
<rect x="883.2" y="137.6" width="3.6" height="3.6" fill="#ffffff"/>
<!-- angle icon -->
<path d="M900.5 170.2 L911.5 170.2 L908.5 162.8 Z" stroke="#c8c8c8" stroke-width="1.2" fill="none" stroke-linejoin="round"/>
<path d="M905 170 C905 168 904 166.5 903 165.8" stroke="#c8c8c8" stroke-width="0.8" fill="none" stroke-dasharray="0.8 0.8"/>
<!-- angle chevron -->
<path d="M951 164.8 L953.7 167.3 L956.4 164.8" stroke="#d8d8d8" stroke-width="1.5" fill="none"/>
<!-- link icon -->
<g fill="none" stroke="#d0d0d0" stroke-width="1.3">
<path d="M1051.8 133.5 L1051.8 130.2 C1051.8 126.8 1056 126.8 1056 130.2 L1056 132.5"/>
<path d="M1050.8 135.3 L1050.8 137.6 C1050.8 141.2 1055.3 141.2 1055.3 137.6 L1055.3 135.5"/>
<path d="M1047.3 128.3 L1059.5 139.5"/>
</g>
<!-- flip icons -->
<g fill="#cfcfcf">
<path d="M994.9 162.6 L994.9 170.6 L999.2 166.6Z"/>
<path d="M1006.3 162.6 L1006.3 170.6 L1002.2 166.6Z"/>
<path d="M1020.9 161.6 L1028.5 161.6 L1024.7 165.4Z"/>
<path d="M1020.9 172.7 L1028.5 172.7 L1024.7 168.9Z"/>
</g>
<path d="M1000.7 162 L1000.7 172" stroke="#9a9a9a" stroke-width="0.8" stroke-dasharray="1 1"/>
<path d="M1019.5 167.1 L1030 167.1" stroke="#9a9a9a" stroke-width="0.8" stroke-dasharray="1 1"/>
<!-- more dots -->
<g fill="#dedede"><circle cx="1054" cy="185.7" r="1.6"/><circle cx="1058.4" cy="185.7" r="1.6"/><circle cx="1062.8" cy="185.7" r="1.6"/>
<circle cx="1054" cy="322.5" r="1.6"/><circle cx="1058.4" cy="322.5" r="1.6"/><circle cx="1062.8" cy="322.5" r="1.6"/></g>
<!-- fill swatch -->
<rect x="877.6" y="223.9" width="13.8" height="13.8" fill="#ffffff" stroke="#2a2a2a" stroke-width="0.8"/>
<path d="M878.2 237.2 L891 224.4" stroke="#e0151b" stroke-width="1.6"/>
<!-- stroke swatch -->
<rect x="877.6" y="247.8" width="13.8" height="13.8" fill="#ffffff" stroke="#2a2a2a" stroke-width="0.8"/>
<rect x="882" y="252.2" width="5" height="5" fill="#2f2f2f"/>
<!-- opacity checker -->
<rect x="877.8" y="271.8" width="13.5" height="13.6" fill="#5a5a5a" stroke="#bdbdbd" stroke-width="0.9"/>
<g fill="#7a7a7a"><rect x="878.3" y="272.3" width="3.1" height="3.1"/><rect x="884.5" y="272.3" width="3.1" height="3.1"/><rect x="881.4" y="275.4" width="3.1" height="3.1"/><rect x="887.6" y="275.4" width="3.1" height="3.1"/><rect x="878.3" y="278.5" width="3.1" height="3.1"/><rect x="884.5" y="278.5" width="3.1" height="3.1"/><rect x="881.4" y="281.6" width="3.1" height="3.1"/><rect x="887.6" y="281.6" width="3.1" height="3.1"/></g>
<!-- stepper chevrons -->
<path d="M947.5 252.5 L950 250 L952.5 252.5 M947.5 257 L950 259.5 L952.5 257" stroke="#d8d8d8" stroke-width="1.2" fill="none"/>
<path d="M990 253.3 L992.7 255.8 L995.4 253.3" stroke="#d8d8d8" stroke-width="1.5" fill="none"/>
<path d="M991.5 275.5 L994 278.2 L991.5 280.9" stroke="#d8d8d8" stroke-width="1.5" fill="none"/>
<!-- dotted underlines -->
<path d="M901.5 260.8 L918 260.8 M901.5 285.2 L935 285.2" stroke="#bdbdbd" stroke-width="0.8" stroke-dasharray="1 1"/>
<!-- buttons -->
<g fill="#4f4f4f" stroke="#6c6c6c" stroke-width="1">
<rect x="877.9" y="362.7" width="81.3" height="16.6" rx="2"/>
<rect x="968.7" y="362.7" width="82.2" height="16.6" rx="2"/>
<rect x="877.9" y="389.1" width="81.3" height="16.2" rx="2"/>
<rect x="968.7" y="389.1" width="82.2" height="16.2" rx="2"/>
<rect x="877.9" y="414" width="173" height="17.2" rx="2"/>
</g>
<!-- red highlight box -->
<rect x="871.2" y="83.8" width="195.7" height="223.3" fill="none" stroke="#d01e22" stroke-width="2.7"/>
</svg>
<div class="t" style="left:877px;top:45.8px;font-size:11px;color:#f0f0f0">属性</div>
<div class="t" style="left:911px;top:45.8px;font-size:11px;color:#b8b8b8">图层</div>
<div class="t" style="left:946px;top:45.8px;font-size:11px;color:#b8b8b8">库</div>
<div class="t" style="left:877px;top:72.3px;font-size:9px;color:#c8c8c8">椭圆</div>
<div class="t" style="left:877px;top:98.5px;font-size:9px;color:#c8c8c8">变换</div>
<div class="t" style="left:904px;top:119.5px;font-size:9px;color:#c8c8c8;font-family:'Liberation Serif',serif">X:</div>
<div class="t" style="left:904px;top:141.0px;font-size:9px;color:#c8c8c8;font-family:'Liberation Serif',serif">Y:</div>
<div class="t mono sx" style="left:918px;top:118.8px;font-size:10px;color:#ececec">640.5 px</div>
<div class="t mono sx" style="left:918px;top:139.8px;font-size:10px;color:#ececec">1250.5 p</div>
<div class="t mono" style="left:917.5px;top:161px;font-size:10px;color:#ececec">0°</div>
<div class="t" style="left:974.5px;top:120.0px;font-size:9px;color:#c8c8c8">宽</div>
<div class="t" style="left:986px;top:120.0px;font-size:9px;color:#8a8a8a">:</div>
<div class="t" style="left:974.5px;top:141.0px;font-size:9px;color:#c8c8c8">高</div>
<div class="t" style="left:986px;top:141.0px;font-size:9px;color:#8a8a8a">:</div>
<div class="t mono sx" style="left:994.5px;top:118.8px;font-size:10px;color:#ececec">690 px</div>
<div class="t mono sx" style="left:994.5px;top:139.8px;font-size:10px;color:#ececec">690 px</div>
<div class="t" style="left:877px;top:207.0px;font-size:9px;color:#c8c8c8">外观</div>
<div class="t" style="left:901.5px;top:227.5px;font-size:9px;color:#c8c8c8">填色</div>
<div class="t" style="left:901.5px;top:250.5px;font-size:9px;color:#dcdcdc">描边</div>
<div class="t mono sx" style="left:959.5px;top:250.3px;font-size:10.4px;color:#ececec">1 pt</div>
<div class="t" style="left:901.5px;top:275.0px;font-size:9px;color:#dcdcdc">不透明度</div>
<div class="t mono" style="left:944.5px;top:274.0px;font-size:9.6px;color:#ececec;letter-spacing:-0.6px">100%</div>
<div class="t" style="left:881.5px;top:295.5px;font-size:12px;font-style:italic;font-family:'Liberation Serif',serif;color:#bdbdbd">fx</div>
<div class="t" style="left:877px;top:347.0px;font-size:9px;color:#c8c8c8">快速操作</div>
<div class="t" style="left:901px;top:368.1px;font-size:8.6px;font-weight:bold;color:#e6e6e6">位移路径</div>
<div class="t" style="left:992.5px;top:368.1px;font-size:8.6px;font-weight:bold;color:#e6e6e6">扩展形状</div>
<div class="t" style="left:910px;top:394.1px;font-size:8.6px;font-weight:bold;color:#e6e6e6">排列</div>
<div class="t" style="left:985px;top:394.1px;font-size:8.6px;font-weight:bold;color:#e6e6e6">对齐像素网格</div>
<div class="t" style="left:946px;top:419.6px;font-size:8.6px;font-weight:bold;color:#e6e6e6">重新着色</div>
<!-- bottom border -->
<div class="a" style="left:0;top:729px;width:1080px;height:2px;background:#3c3c3c"></div>

<!-- red arrow -->
<svg style="left:0;top:0" width="1080" height="733" viewBox="0 0 1080 733">
<path d="M747.8 351.2 L852 288" stroke="#e3121a" stroke-width="2.6" stroke-linecap="round"/>
<path d="M861.8 282 L846.8 283.4 L856.6 291.6Z" fill="#e3121a" stroke="#e3121a" stroke-width="1" stroke-linejoin="round"/>
</svg>
<!-- watermark -->
<svg style="left:0;top:0" width="1080" height="733" viewBox="0 0 1080 733">
<g fill="#ececec">
<ellipse cx="933" cy="679" rx="14" ry="12.3"/>
<path d="M922.5 687 L922 694 L929 689.5Z"/>
</g>
<ellipse cx="947" cy="689" rx="13.8" ry="12.2" fill="#535353"/>
<g fill="#ececec">
<ellipse cx="947" cy="689" rx="12.2" ry="10.7"/>
<path d="M951 697 L956.5 701.5 L955.5 694.5Z"/>
</g>
<g fill="#535353"><circle cx="927.6" cy="675.3" r="1.9"/><circle cx="939.2" cy="675.3" r="1.9"/><circle cx="942.2" cy="685.3" r="1.5"/><circle cx="951.5" cy="685.3" r="1.5"/></g>
</svg>
<div class="t" style="left:965px;top:672px;font-size:26.5px;color:#f2f2f2">野鹿志</div>
</body></html>
